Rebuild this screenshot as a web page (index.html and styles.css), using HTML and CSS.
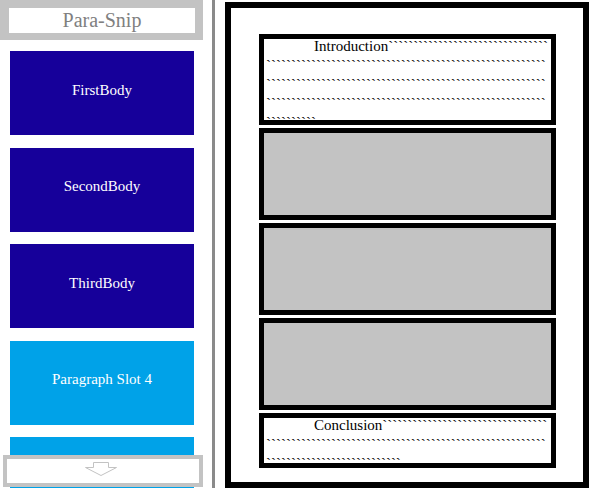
FILE: index.html
```html
<!DOCTYPE html>
<html>
  <head>
    <title>Para-Snip</title>
    <meta charset="utf-8">
    <link rel="stylesheet" href="styles.css">
  </head>
  <body>
    <div class="page">
      <div class="sidebar">
        <div class="title"><div class="title-box">Para-Snip</div></div>
        <div class="slots">
          <div class="slot dark">FirstBody</div>
          <div class="slot dark">SecondBody</div>
          <div class="slot dark">ThirdBody</div>
          <div class="slot light">Paragraph Slot 4</div>
          <div class="slot light"></div>
        </div>
        <!-- scroll button sits over the bottom of the list -->
        <div class="scroll-down">
          <svg width="192" height="24" viewBox="0 0 192 24">
            <polygon points="86.5,3.5 101.5,3.5 101.5,8.5 109.5,8.5 94,16.5 78.5,8.5 86.5,8.5" fill="#fff" stroke="#c3c3c3" stroke-width="1"/>
          </svg>
        </div>
      </div>
      <div class="sheet">
        <div class="frame">
          <div class="para text"><p class="words">Introduction&#96;&#96;&#96;&#96;&#96;&#96;&#96;&#96;&#96;&#96;&#96;&#96;&#96;&#96;&#96;&#96;&#96;&#96;&#96;&#96;&#96;&#96;&#96;&#96;&#96;&#96;&#96;&#96;&#96;&#96;&#96;&#96;&#96;&#96;&#96;&#96;&#96;&#96;&#96;&#96;&#96;&#96;&#96;&#96;&#96;&#96;&#96;&#96;&#96;&#96;&#96;&#96;&#96;&#96;&#96;&#96;&#96;&#96;&#96;&#96;&#96;&#96;&#96;&#96;&#96;&#96;&#96;&#96;&#96;&#96;&#96;&#96;&#96;&#96;&#96;&#96;&#96;&#96;&#96;&#96;&#96;&#96;&#96;&#96;&#96;&#96;&#96;&#96;&#96;&#96;&#96;&#96;&#96;&#96;&#96;&#96;&#96;&#96;&#96;&#96;&#96;&#96;&#96;&#96;&#96;&#96;&#96;&#96;&#96;&#96;&#96;&#96;&#96;&#96;&#96;&#96;&#96;&#96;&#96;&#96;&#96;&#96;&#96;&#96;&#96;&#96;&#96;&#96;&#96;&#96;&#96;&#96;&#96;&#96;&#96;&#96;&#96;&#96;&#96;&#96;&#96;&#96;&#96;&#96;&#96;&#96;&#96;&#96;&#96;&#96;&#96;&#96;&#96;&#96;&#96;&#96;&#96;&#96;&#96;&#96;&#96;&#96;&#96;&#96;&#96;&#96;&#96;&#96;&#96;&#96;&#96;&#96;&#96;&#96;&#96;&#96;&#96;&#96;&#96;&#96;&#96;&#96;&#96;&#96;&#96;&#96;&#96;&#96;&#96;&#96;&#96;&#96;&#96;&#96;&#96;&#96;&#96;&#96;&#96;&#96;&#96;&#96;&#96;&#96;&#96;&#96;&#96;&#96;&#96;&#96;</p></div>
          <div class="para empty"></div>
          <div class="para empty"></div>
          <div class="para empty"></div>
          <div class="para text last"><p class="words">Conclusion&#96;&#96;&#96;&#96;&#96;&#96;&#96;&#96;&#96;&#96;&#96;&#96;&#96;&#96;&#96;&#96;&#96;&#96;&#96;&#96;&#96;&#96;&#96;&#96;&#96;&#96;&#96;&#96;&#96;&#96;&#96;&#96;&#96;&#96;&#96;&#96;&#96;&#96;&#96;&#96;&#96;&#96;&#96;&#96;&#96;&#96;&#96;&#96;&#96;&#96;&#96;&#96;&#96;&#96;&#96;&#96;&#96;&#96;&#96;&#96;&#96;&#96;&#96;&#96;&#96;&#96;&#96;&#96;&#96;&#96;&#96;&#96;&#96;&#96;&#96;&#96;&#96;&#96;&#96;&#96;&#96;&#96;&#96;&#96;&#96;&#96;&#96;&#96;&#96;&#96;&#96;&#96;&#96;&#96;&#96;&#96;&#96;&#96;&#96;&#96;&#96;&#96;&#96;&#96;&#96;&#96;&#96;&#96;&#96;&#96;&#96;&#96;&#96;&#96;&#96;&#96;</p></div>
        </div>
      </div>
    </div>
  </body>
</html>
```

FILE: styles.css
```css
body
{
  margin: 0;
  background: #fff;
  font-family: "Liberation Serif", "Times New Roman", serif;
}
.page
{
  display: flex;
  height: 488px;
  overflow: hidden;
}
.sidebar
{
  position: relative;
  width: 212px;
  height: 488px;
  flex-shrink: 0;
  overflow: hidden;
  border-right: 3px solid #8a8a8a;
}
.title
{
  width: 203px;
  height: 40px;
  box-sizing: border-box;
  padding: 8px 8px 7px 9px;
  background: #c3c3c3;
}
.title-box
{
  height: 25px;
  line-height: 25px;
  background: #fff;
  color: #808080;
  font-size: 20px;
  text-align: center;
}
.slots
{
  display: flex;
  flex-direction: column;
  gap: 12.5px;
  padding: 11px 0 0 10px;
}
.slot
{
  width: 184px;
  height: 84px;
  box-sizing: border-box;
  padding-bottom: 6px;
  flex-shrink: 0;
  display: flex;
  align-items: center;
  justify-content: center;
  color: #fff;
  font-size: 15px;
}
.dark
{
  background: #16009a;
}
.light
{
  background: #00a2e8;
}
.scroll-down
{
  position: absolute;
  left: 3px;
  bottom: 1px;
  width: 200px;
  height: 32px;
  box-sizing: border-box;
  border: 4px solid #c3c3c3;
  background: #fff;
}
.scroll-down svg
{
  display: block;
}
.sheet
{
  padding: 2px 0 0 10px;
}
.frame
{
  width: 364px;
  height: 486px;
  box-sizing: border-box;
  border: 6px solid #000;
  padding: 26px 27px 0 28px;
  display: flex;
  flex-direction: column;
  gap: 3px;
}
.para
{
  border: 5px solid #000;
  box-sizing: border-box;
  flex-shrink: 0;
}
.text
{
  height: 91px;
  padding: 0 2px;
  font-size: 15px;
  line-height: 19px;
}
.words
{
  margin: -2px 0 0;
  text-indent: 48px;
  word-break: break-all;
}
.empty
{
  height: 92px;
  background: #c3c3c3;
}
.last
{
  height: 55px;
}
```
